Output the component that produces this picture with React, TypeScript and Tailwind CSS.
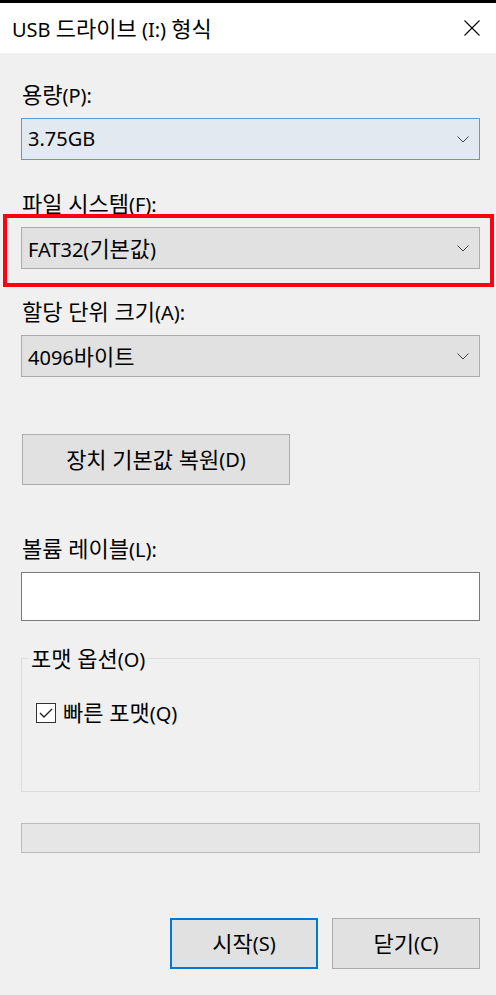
import React from "react";

const font = { fontFamily: '"Noto Sans", "Noto Sans CJK KR", sans-serif' };

function T({ text }: { text: string }) {
  const parts = text.match(/[가-힣]+(?: [가-힣]+)*|[^가-힣]+/g) || [];
  return (
    <>
      {parts.map((p, i) =>
        /[가-힣]/.test(p) ? (
          <span key={i} className="text-[22px]">
            {p}
          </span>
        ) : (
          <span key={i} className="text-[20px]">
            {p}
          </span>
        )
      )}
    </>
  );
}

function Chevron() {
  return (
    <svg width="12" height="7" viewBox="0 0 12 7" className="shrink-0">
      <path d="M0.5 0.5 L6 6 L11.5 0.5" fill="none" stroke="#444" strokeWidth="1" />
    </svg>
  );
}

function Select({ value, active }: { value: string; active?: boolean }) {
  return (
    <div
      className={
        "h-[42px] w-full flex items-center justify-between pl-[6px] pr-[10px] border " +
        (active ? "bg-[#e3e9f0] border-[#5a9bd5]" : "bg-[#e1e1e1] border-[#adadad]")
      }
    >
      <span className="leading-none text-black whitespace-nowrap">
        <T text={value} />
      </span>
      <Chevron />
    </div>
  );
}

function Label({ children }: { children: string }) {
  return (
    <div className="h-[24px] leading-[24px] text-black pl-[1px] whitespace-nowrap">
      <T text={children} />
    </div>
  );
}

export default function App() {
  return (
    <div className="w-full h-[995px] bg-[#f0f0f0] flex flex-col overflow-hidden" style={font}>
      <div className="h-[3px] bg-black" />
      <div className="h-[50px] bg-white flex items-center justify-between pl-[12px] pr-[16px]">
        <span className="text-black leading-none whitespace-nowrap">
          <T text="USB 드라이브 (I:) 형식" />
        </span>
        <svg width="16" height="16" viewBox="0 0 16 16">
          <path d="M0.5 0.5 L15.5 15.5 M15.5 0.5 L0.5 15.5" stroke="#000" strokeWidth="1.1" />
        </svg>
      </div>

      <div className="flex flex-col pl-[21px] pr-[16px]">
        <div className="mt-[29px]">
          <Label>용량(P):</Label>
        </div>
        <div className="mt-[12px]">
          <Select value="3.75GB" active />
        </div>

        <div className="mt-[31px]">
          <Label>파일 시스템(F):</Label>
        </div>
        <div className="mt-[12px] relative">
          <Select value="FAT32(기본값)" />
          <div className="absolute left-[-18px] top-[-13px] w-[491px] h-[73px] border-4 border-[#ff0014] pointer-events-none" />
        </div>

        <div className="mt-[30px]">
          <Label>할당 단위 크기(A):</Label>
        </div>
        <div className="mt-[12px]">
          <Select value="4096바이트" />
        </div>

        <div className="mt-[57px] ml-[1px] w-[268px] h-[51px] bg-[#e1e1e1] border border-[#adadad] flex items-center justify-center text-black whitespace-nowrap">
          <T text="장치 기본값 복원(D)" />
        </div>

        <div className="mt-[51px]">
          <Label>볼륨 레이블(L):</Label>
        </div>
        <div className="mt-[12px] h-[49px] w-full bg-white border border-[#7a7a7a]" />

        <div className="mt-[37px] relative h-[134px] w-full border border-[#dcdcdc]">
          <div className="absolute left-[6px] top-[-14px] px-[3px] bg-[#f0f0f0] leading-[26px] text-black whitespace-nowrap">
            <T text="포맷 옵션(O)" />
          </div>
          <div className="absolute left-[14px] top-[42px] flex items-center gap-[7px]">
            <div className="w-[20px] h-[20px] bg-white border border-[#333] flex items-center justify-center">
              <svg width="14" height="10" viewBox="0 0 14 10">
                <path d="M1 5 L5 9 L13 1" fill="none" stroke="#222" strokeWidth="1.4" />
              </svg>
            </div>
            <span className="leading-none text-black whitespace-nowrap">
              <T text="빠른 포맷(Q)" />
            </span>
          </div>
        </div>

        <div className="mt-[31px] h-[30px] w-full bg-[#e6e6e6] border border-[#bcbcbc]" />

        <div className="mt-[65px] flex justify-end gap-[14px]">
          <div className="w-[148px] h-[51px] bg-[#e1e1e1] border-2 border-[#0078d7] flex items-center justify-center text-black whitespace-nowrap">
            <T text="시작(S)" />
          </div>
          <div className="w-[148px] h-[51px] bg-[#e1e1e1] border border-[#adadad] flex items-center justify-center text-black whitespace-nowrap">
            <T text="닫기(C)" />
          </div>
        </div>
      </div>
    </div>
  );
}
